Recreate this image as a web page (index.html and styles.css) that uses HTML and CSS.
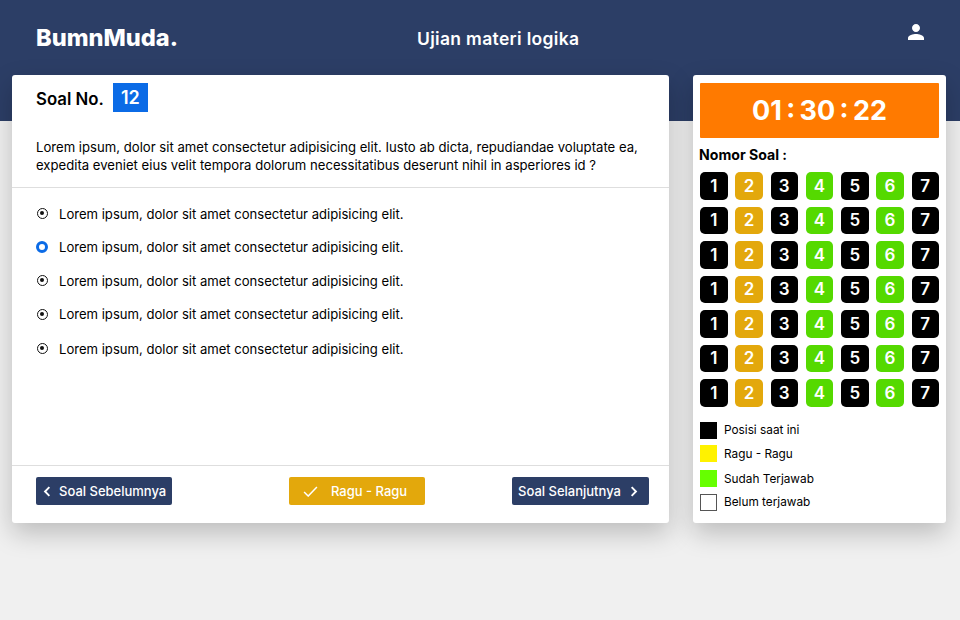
FILE: index.html
```html
<!DOCTYPE html>
<html>
<head>
  <meta charset="utf-8">
  <title>Ujian materi logika</title>
  <link rel="stylesheet" href="styles.css">
</head>
<body>
  <header class="topbar">
    <div class="logo">BumnMuda.</div>
    <div class="exam-title">Ujian materi logika</div>
    <svg class="user-icon" viewBox="0 0 24 24" width="24" height="24"><path d="M12 12c2.21 0 4-1.79 4-4s-1.79-4-4-4-4 1.79-4 4 1.79 4 4 4zm0 2c-2.67 0-8 1.34-8 4v2h16v-2c0-2.66-5.33-4-8-4z"/></svg>
  </header>

  <main class="layout">
    <section class="card question">
      <div class="question-head">
        <span class="question-label">Soal No.</span>
        <span class="question-no">12</span>
      </div>
      <p class="question-text">Lorem ipsum, dolor sit amet consectetur adipisicing elit. Iusto ab dicta, repudiandae voluptate ea, expedita eveniet eius velit tempora dolorum necessitatibus deserunt nihil in asperiores id ?</p>

      <div class="options">
        <div class="option"><span class="radio"></span>Lorem ipsum, dolor sit amet consectetur adipisicing elit.</div>
        <div class="option"><span class="radio checked"></span>Lorem ipsum, dolor sit amet consectetur adipisicing elit.</div>
        <div class="option"><span class="radio"></span>Lorem ipsum, dolor sit amet consectetur adipisicing elit.</div>
        <div class="option"><span class="radio"></span>Lorem ipsum, dolor sit amet consectetur adipisicing elit.</div>
        <div class="option last"><span class="radio"></span>Lorem ipsum, dolor sit amet consectetur adipisicing elit.</div>
      </div>

      <div class="question-foot">
        <button class="btn btn-navy btn-prev">
          <svg viewBox="0 0 10 14" width="8" height="11"><path d="M8 1.5 2.5 7 8 12.5"/></svg>
          Soal Sebelumnya
        </button>
        <button class="btn btn-amber">
          <svg viewBox="0 0 16 12" width="15" height="11"><path d="M1 6.5 5.5 11 15 1"/></svg>
          Ragu - Ragu
        </button>
        <button class="btn btn-navy btn-next">
          Soal Selanjutnya
          <svg viewBox="0 0 10 14" width="8" height="11"><path d="M2 1.5 7.5 7 2 12.5"/></svg>
        </button>
      </div>
    </section>

    <aside class="card side">
      <div class="timer">01 : 30 : 22</div>
      <h4 class="side-title">Nomor Soal :</h4>
      <div class="numbers">
        <a class="num black">1</a><a class="num amber">2</a><a class="num black">3</a><a class="num green">4</a><a class="num black">5</a><a class="num green">6</a><a class="num black">7</a>
        <a class="num black">1</a><a class="num amber">2</a><a class="num black">3</a><a class="num green">4</a><a class="num black">5</a><a class="num green">6</a><a class="num black">7</a>
        <a class="num black">1</a><a class="num amber">2</a><a class="num black">3</a><a class="num green">4</a><a class="num black">5</a><a class="num green">6</a><a class="num black">7</a>
        <a class="num black">1</a><a class="num amber">2</a><a class="num black">3</a><a class="num green">4</a><a class="num black">5</a><a class="num green">6</a><a class="num black">7</a>
        <a class="num black">1</a><a class="num amber">2</a><a class="num black">3</a><a class="num green">4</a><a class="num black">5</a><a class="num green">6</a><a class="num black">7</a>
        <a class="num black">1</a><a class="num amber">2</a><a class="num black">3</a><a class="num green">4</a><a class="num black">5</a><a class="num green">6</a><a class="num black">7</a>
        <a class="num black">1</a><a class="num amber">2</a><a class="num black">3</a><a class="num green">4</a><a class="num black">5</a><a class="num green">6</a><a class="num black">7</a>
      </div>
      <ul class="legend">
        <li><span class="swatch sw-black"></span>Posisi saat ini</li>
        <li><span class="swatch sw-yellow"></span>Ragu - Ragu</li>
        <li class="gap"><span class="swatch sw-green"></span>Sudah Terjawab</li>
        <li><span class="swatch sw-empty"></span>Belum terjawab</li>
      </ul>
    </aside>
  </main>
</body>
</html>
```

FILE: styles.css
```css
* {
  box-sizing: border-box;
}

html,
body {
  height: 100%;
}

body {
  margin: 0;
  background-color: #f0f0f0;
  color: #000;
  font-family: "Inter", "Liberation Sans", sans-serif;
}

.topbar {
  display: flex;
  align-items: flex-start;
  height: 121px;
  padding: 20px 32px 0 36px;
  background-color: #2c3e66;
  color: #fff;
}

.logo {
  flex: 0 0 381px;
  margin-top: 4px;
  font-size: 23.6px;
  font-weight: 800;
  line-height: 28px;
}

.exam-title {
  margin-top: 7px;
  font-size: 17.5px;
  font-weight: 600;
  letter-spacing: 0.32px;
  line-height: 24px;
}

.user-icon {
  margin-left: auto;
  fill: #fff;
}

.layout {
  display: grid;
  grid-template-columns: 657px 253px;
  gap: 24px;
  margin-top: -46px;
  padding-left: 12px;
}

.card {
  height: 448px;
  background-color: #fff;
  border-radius: 3px;
  box-shadow: 0 10px 26px 0 rgba(0, 0, 0, 0.22);
}

/* soal */
.question {
  display: flex;
  flex-direction: column;
}

.question-head {
  display: flex;
  align-items: flex-start;
  gap: 9px;
  padding: 8px 24px 0;
}

.question-label {
  margin-top: 4px;
  font-size: 16.8px;
  font-weight: 600;
  line-height: 24px;
}

.question-no {
  width: 35px;
  height: 29px;
  background-color: #0b6be6;
  color: #fff;
  font-size: 18px;
  font-weight: 600;
  line-height: 29px;
  text-align: center;
}

.question-text {
  margin: 0;
  padding: 26px 24px 13px;
  border-bottom: 1px solid #dedede;
  font-size: 13.13px;
  line-height: 18px;
}

.options {
  flex: 1;
  padding: 9px 24px 0;
  font-size: 13.08px;
}

.option {
  display: flex;
  align-items: center;
  height: 33.5px;
}

.option.last {
  margin-top: 1px;
}

.radio {
  flex: none;
  position: relative;
  width: 11px;
  height: 11px;
  margin: 0 11px 0 1px;
  border: 1.5px solid #111;
  border-radius: 50%;
}

.radio::after {
  content: "";
  position: absolute;
  left: 2px;
  top: 2px;
  width: 4px;
  height: 4px;
  border-radius: 50%;
  background-color: #111;
}

.radio.checked {
  width: 12px;
  height: 12px;
  margin: 0 11px 0 0;
  border: 3.5px solid #0b6be6;
}

.radio.checked::after {
  display: none;
}

.question-foot {
  display: flex;
  align-items: flex-start;
  height: 58px;
  padding: 11px 20px 0 24px;
  border-top: 1px solid #dedede;
}

.btn {
  display: flex;
  align-items: center;
  height: 28px;
  padding: 0;
  border: 0;
  border-radius: 2px;
  color: #fff;
  font-family: inherit;
  font-size: 13px;
  font-weight: 500;
}

.btn svg {
  fill: none;
  stroke: #fff;
  stroke-width: 2.4;
}

.btn-navy {
  background-color: #2c3e66;
}

.btn-amber {
  width: 136px;
  margin-left: 117px;
  padding-left: 14px;
  gap: 13px;
  background-color: #e3a80c;
}

.btn-amber svg {
  stroke-width: 1.6;
}

.btn-prev {
  width: 136px;
  padding-left: 7px;
  gap: 8px;
}

.btn-next {
  width: 137px;
  margin-left: auto;
  padding-left: 6px;
  gap: 9px;
}

/* panel kanan */
.side {
  padding: 8px 7px 0;
}

.timer {
  height: 55px;
  background-color: #ff7a00;
  border-radius: 1px;
  color: #fff;
  font-size: 27px;
  font-weight: 700;
  word-spacing: -2px;
  line-height: 55px;
  text-align: center;
}

.side-title {
  margin: 8px 0 8px -1px;
  font-size: 14.1px;
  font-weight: 700;
  line-height: 18px;
}

.numbers {
  display: grid;
  grid-template-columns: repeat(7, 27.5px);
  grid-auto-rows: 27.5px;
  justify-content: space-between;
  row-gap: 7px;
}

.num {
  display: flex;
  align-items: center;
  justify-content: center;
  border-radius: 5px;
  color: #fff;
  font-size: 17px;
  font-weight: 600;
}

.black {
  background-color: #000;
}

.amber {
  background-color: #e3a80c;
}

.green {
  background-color: #55d900;
}

.legend {
  margin: 15px 0 0;
  padding: 0;
  list-style: none;
  font-size: 11.8px;
}

.legend li {
  display: flex;
  align-items: center;
  gap: 7px;
  height: 17px;
  margin-bottom: 6.5px;
}

.legend li.gap {
  margin-top: 8px;
}

.swatch {
  flex: none;
  width: 17px;
  height: 17px;
}

.sw-black {
  background-color: #000;
}

.sw-yellow {
  background-color: #fff200;
}

.sw-green {
  background-color: #66ff00;
}

.sw-empty {
  border: 1px solid #555;
}
```
